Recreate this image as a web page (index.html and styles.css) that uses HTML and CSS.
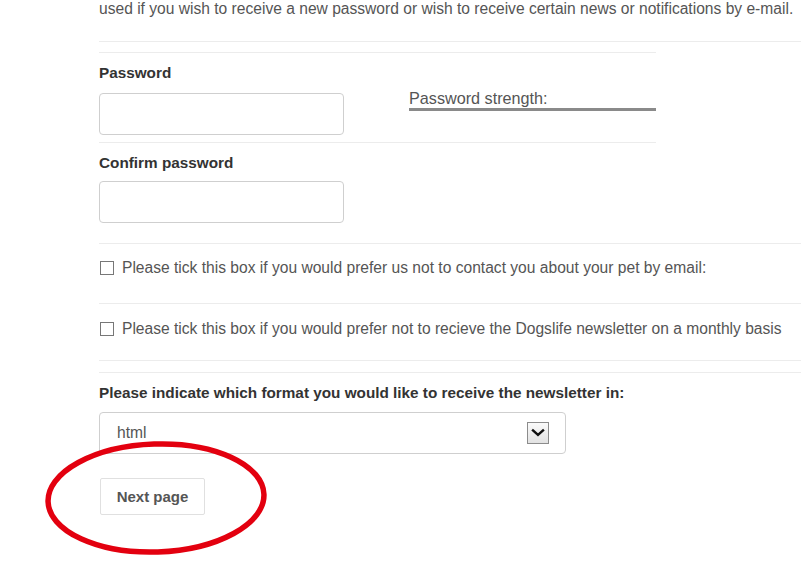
FILE: index.html
```html
<!DOCTYPE html>
<html>
<head>
<meta charset="utf-8">
<link rel="stylesheet" href="styles.css">
</head>
<body>
<div class="page">
  <p class="intro">used if you wish to receive a new password or wish to receive certain news or notifications by e-mail.</p>
  <div class="rule"></div>
  <div class="pw-section">
    <div class="pw-field">
      <label class="label">Password</label>
      <div class="input"></div>
    </div>
    <div class="strength">
      <div class="strength-text">Password strength:</div>
      <div class="strength-bar"></div>
    </div>
  </div>
  <div class="confirm-section">
    <label class="label">Confirm password</label>
    <div class="input"></div>
  </div>
  <div class="check-row check-first">
    <span class="checkbox"></span>
    <span class="check-text">Please tick this box if you would prefer us not to contact you about your pet by email:</span>
  </div>
  <div class="check-row check-second">
    <span class="checkbox"></span>
    <span class="check-text">Please tick this box if you would prefer not to recieve the Dogslife newsletter on a monthly basis</span>
  </div>
  <div class="format-section">
    <label class="label">Please indicate which format you would like to receive the newsletter in:</label>
    <div class="select">
      <span class="select-value">html</span>
      <span class="select-arrow">
        <svg width="14" height="10" viewBox="0 0 14 10"><path d="M2 2.5 L7 7 L12 2.5" fill="none" stroke="#111" stroke-width="2.4" stroke-linecap="square"/></svg>
      </span>
    </div>
    <button class="btn">Next page</button>
  </div>
</div>
<svg class="highlight" width="240" height="130" viewBox="0 0 240 130">
  <ellipse cx="120" cy="65" rx="108" ry="54" fill="none" stroke="#e3000f" stroke-width="5.5" transform="rotate(-2 120 65)"/>
</svg>
</body>
</html>
```

FILE: styles.css
```css
html, body {
  margin: 0;
  padding: 0;
  background: #fff;
}
body {
  font-family: "Liberation Sans", Arial, sans-serif;
  color: #555;
  position: relative;
  width: 801px;
  height: 562px;
  overflow: hidden;
}
.page {
  padding-left: 99px;
}
.intro {
  margin: 0;
  font-size: 15.6px;
  line-height: 18px;
  color: #555;
  white-space: nowrap;
}
.rule {
  margin-top: 23px;
  height: 1px;
  background: #ececec;
}
.pw-section {
  margin-top: 10px;
  width: 557px;
  border-top: 1px solid #ececec;
  border-bottom: 1px solid #ececec;
  padding: 11px 0 7px;
  display: flex;
}
.pw-field {
  display: flex;
  flex-direction: column;
}
.label {
  display: block;
  font-weight: bold;
  font-size: 15.3px;
  line-height: 18px;
  color: #333;
}
.input {
  width: 243px;
  height: 40px;
  border: 1px solid #cfcfcf;
  border-radius: 4px;
  margin-top: 11px;
}
.strength {
  flex: 1;
  margin-left: 65px;
  padding-top: 25px;
}
.strength-text {
  font-size: 16.2px;
  line-height: 18px;
  color: #555;
}
.strength-bar {
  margin-top: 1px;
  height: 3px;
  background: #8a8a8a;
}
.confirm-section {
  padding: 11px 0 20px;
  border-bottom: 1px solid #ececec;
}
.confirm-section .input {
  margin-top: 9px;
}
.check-row {
  display: flex;
  align-items: center;
  border-bottom: 1px solid #ececec;
  line-height: 18px;
}
.check-first {
  padding: 15px 0 26px;
}
.check-second {
  padding: 16px 0 22px;
}
.checkbox {
  width: 12px;
  height: 12px;
  border: 1px solid #777;
  margin-left: 1px;
  margin-right: 8px;
  background: #fff;
  flex: none;
}
.check-text {
  font-size: 15.6px;
  color: #555;
  white-space: nowrap;
}
.format-section {
  margin-top: 11px;
  border-top: 1px solid #ececec;
  padding-top: 11px;
}
.select {
  margin-top: 10px;
  height: 40px;
  border: 1px solid #cfcfcf;
  border-radius: 4px;
  display: flex;
  align-items: center;
  justify-content: space-between;
  padding: 0 16px 0 17px;
  box-sizing: content-box;
  width: 432px;
}
.select-value {
  font-size: 15.6px;
  color: #555;
}
.select-arrow {
  width: 20px;
  height: 20px;
  border: 1px solid #8c8c8c;
  background: linear-gradient(#fafafa, #e2e2e2);
  display: flex;
  align-items: center;
  justify-content: center;
}
.btn {
  display: block;
  margin-top: 24px;
  margin-left: 1px;
  width: 105px;
  height: 37px;
  border: 1px solid #e0e0e0;
  border-radius: 2px;
  background: #fff;
  font-family: "Liberation Sans", Arial, sans-serif;
  font-weight: bold;
  font-size: 15px;
  color: #555;
  padding: 0;
}
.highlight {
  position: absolute;
  left: 36px;
  top: 433px;
}
```
